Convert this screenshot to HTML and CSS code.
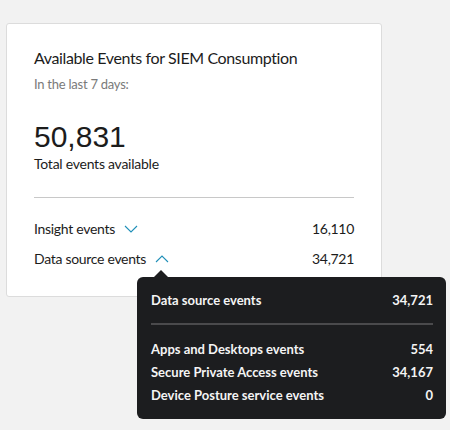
FILE: index.html
```html
<!DOCTYPE html>
<html lang="en">
<head>
    <meta charset="UTF-8">
    <title>SIEM Events</title>
    <link rel="stylesheet" href="styles.css">
</head>
<body>
    <div class="card">
        <h2 class="card-title">Available Events for SIEM Consumption</h2>
        <p class="card-sub">In the last 7 days:</p>
        <div class="total">50,831</div>
        <div class="total-label">Total events available</div>
        <hr class="divider">
        <div class="row">
            <span class="row-label">Insight events
                <svg class="chev" width="14" height="8" viewBox="0 0 14 8"><path d="M1 1 L7 7 L13 1" fill="none" stroke="#1f8fb8" stroke-width="1.1"/></svg>
            </span>
            <span>16,110</span>
        </div>
        <div class="row row-open">
            <span class="row-label">Data source events
                <svg class="chev" width="14" height="8" viewBox="0 0 14 8"><path d="M1 7 L7 1 L13 7" fill="none" stroke="#1f8fb8" stroke-width="1.1"/></svg>
            </span>
            <span>34,721</span>
            <div class="tooltip">
                <div class="tip-row tip-head">
                    <span>Data source events</span>
                    <span>34,721</span>
                </div>
                <hr class="tip-divider">
                <div class="tip-row"><span>Apps and Desktops events</span><span>554</span></div>
                <div class="tip-row"><span>Secure Private Access events</span><span>34,167</span></div>
                <div class="tip-row"><span>Device Posture service events</span><span>0</span></div>
            </div>
        </div>
    </div>
</body>
</html>
```
FILE: styles.css
```css
* {
    box-sizing: border-box;
    margin: 0;
    padding: 0;
}

html, body {
    min-height: 100%;
}

body {
    font-family: Lato, 'Liberation Sans', sans-serif;
    background: #f2f2f2;
    color: #1c1c1c;
    padding: 23px 0 0 6px;
    min-height: 430px;
}

.card {
    width: 376px;
    background: #fff;
    border: 1px solid #dcdcdc;
    border-radius: 3px;
    padding: 24px 27px 28px 27px;
}

.card-title {
    font-size: 16px;
    font-weight: 400;
    line-height: 20px;
    letter-spacing: -0.38px;
}

.card-sub {
    font-size: 13px;
    color: #7a7a7a;
    margin-top: 8px;
    line-height: 16px;
    letter-spacing: -0.25px;
}

.total {
    font-family: 'Liberation Sans', Arial, sans-serif;
    font-size: 30px;
    line-height: 34px;
    margin-top: 28px;
}

.total-label {
    font-size: 14px;
    line-height: 18px;
    margin-top: 1px;
    letter-spacing: -0.25px;
}

.divider {
    border: none;
    border-top: 1px solid #c8c8c8;
    margin-top: 24px;
}

.row {
    display: flex;
    justify-content: space-between;
    font-size: 14px;
    line-height: 18px;
    margin-top: 22px;
    letter-spacing: -0.3px;
}

.row + .row {
    margin-top: 12px;
}

.row-open {
    position: relative;
}

.chev {
    margin-left: 6px;
    vertical-align: 1px;
}

.tooltip {
    position: absolute;
    left: 103px;
    top: 27px;
    width: 309px;
    background: #1c1d1f;
    color: #f4f4f4;
    border-radius: 6px;
    padding: 12px 13px 12px 14px;
    font-size: 13px;
    font-weight: 700;
    letter-spacing: 0;
    z-index: 10;
}

.tooltip::before {
    content: "";
    position: absolute;
    left: 17px;
    top: -7px;
    border-left: 7px solid transparent;
    border-right: 7px solid transparent;
    border-bottom: 7px solid #1c1d1f;
}

.tip-row {
    display: flex;
    justify-content: space-between;
    line-height: 23px;
}

.tip-divider {
    border: none;
    border-top: 2px solid #4a4a4c;
    margin: 11px 0 13px;
}
```
